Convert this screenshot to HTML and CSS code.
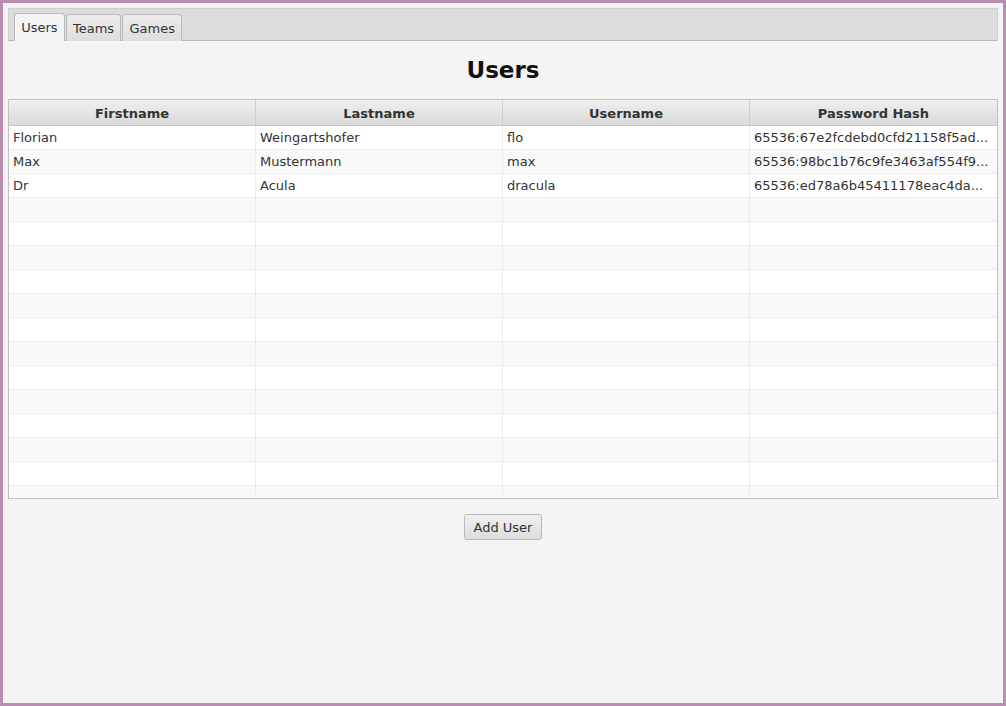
FILE: index.html
```html
<!DOCTYPE html>
<html>
<head>
<meta charset="utf-8">
<link rel="stylesheet" href="styles.css">
</head>
<body>
<div class="frame">
  <div class="tabbar">
    <div class="tab selected">Users</div>
    <div class="tab">Teams</div>
    <div class="tab">Games</div>
  </div>
  <div class="content">
    <h1 class="title">Users</h1>
    <div class="table">
      <div class="row head">
        <div class="cell">Firstname</div>
        <div class="cell">Lastname</div>
        <div class="cell">Username</div>
        <div class="cell">Password Hash</div>
      </div>
      <div class="body">
        <div class="row"><div class="cell">Florian</div><div class="cell">Weingartshofer</div><div class="cell">flo</div><div class="cell">65536:67e2fcdebd0cfd21158f5ad...</div></div>
        <div class="row"><div class="cell">Max</div><div class="cell">Mustermann</div><div class="cell">max</div><div class="cell">65536:98bc1b76c9fe3463af554f9...</div></div>
        <div class="row"><div class="cell">Dr</div><div class="cell">Acula</div><div class="cell">dracula</div><div class="cell">65536:ed78a6b45411178eac4da...</div></div>
        <div class="row"><div class="cell"></div><div class="cell"></div><div class="cell"></div><div class="cell"></div></div>
        <div class="row"><div class="cell"></div><div class="cell"></div><div class="cell"></div><div class="cell"></div></div>
        <div class="row"><div class="cell"></div><div class="cell"></div><div class="cell"></div><div class="cell"></div></div>
        <div class="row"><div class="cell"></div><div class="cell"></div><div class="cell"></div><div class="cell"></div></div>
        <div class="row"><div class="cell"></div><div class="cell"></div><div class="cell"></div><div class="cell"></div></div>
        <div class="row"><div class="cell"></div><div class="cell"></div><div class="cell"></div><div class="cell"></div></div>
        <div class="row"><div class="cell"></div><div class="cell"></div><div class="cell"></div><div class="cell"></div></div>
        <div class="row"><div class="cell"></div><div class="cell"></div><div class="cell"></div><div class="cell"></div></div>
        <div class="row"><div class="cell"></div><div class="cell"></div><div class="cell"></div><div class="cell"></div></div>
        <div class="row"><div class="cell"></div><div class="cell"></div><div class="cell"></div><div class="cell"></div></div>
        <div class="row"><div class="cell"></div><div class="cell"></div><div class="cell"></div><div class="cell"></div></div>
        <div class="row"><div class="cell"></div><div class="cell"></div><div class="cell"></div><div class="cell"></div></div>
        <div class="row"><div class="cell"></div><div class="cell"></div><div class="cell"></div><div class="cell"></div></div>
      </div>
    </div>
    <button class="btn">Add User</button>
  </div>
</div>
</body>
</html>
```

FILE: styles.css
```css
html, body {
  margin: 0;
  padding: 0;
}
body {
  font-family: "DejaVu Sans", "Liberation Sans", sans-serif;
  font-size: 13px;
  color: #333333;
}
.frame {
  box-sizing: border-box;
  width: 1006px;
  height: 706px;
  border: 3px solid #b68fb1;
  background: #f4f4f4;
  padding: 5px;
  display: flex;
  flex-direction: column;
}
.tabbar {
  box-sizing: border-box;
  height: 33px;
  background: #dcdcdc;
  border: 1px solid #cfcfcf;
  border-bottom-color: #b9b9b9;
  display: flex;
  align-items: flex-end;
  padding: 0 0 0 5px;
  gap: 1px;
}
.tab {
  box-sizing: border-box;
  height: 27px;
  margin-bottom: -1px;
  padding: 0 6.2px;
  display: flex;
  align-items: center;
  border: 1px solid #bcbcbc;
  border-bottom: none;
  border-radius: 3px 3px 0 0;
  background: linear-gradient(#ececec, #dedede);
  color: #333333;
}
.tab.selected {
  background: #f4f4f4;
  height: 28px;
}
.content {
  display: flex;
  flex-direction: column;
  align-items: center;
}
.title {
  margin: 0;
  height: 58px;
  line-height: 58px;
  font-size: 23px;
  font-weight: bold;
  color: #111111;
}
.table {
  box-sizing: border-box;
  width: 990px;
  height: 400px;
  border: 1px solid #c0c0c0;
  background: #ffffff;
  overflow: hidden;
}
.row {
  display: grid;
  grid-template-columns: 247px 247px 247px 247px;
  height: 24px;
  box-sizing: border-box;
  border-bottom: 1px solid #ececec;
}
.body .row:nth-child(even) {
  background: #f9f9f9;
}
.cell {
  box-sizing: border-box;
  border-right: 1px solid #ececec;
  padding: 0 4px;
  line-height: 23px;
  white-space: nowrap;
  overflow: hidden;
}
.cell:last-child {
  border-right: none;
}
.row.head {
  height: 26px;
  background: linear-gradient(#efefef, #dadada);
  border-bottom: 1px solid #c6c6c6;
}
.head .cell {
  text-align: center;
  font-weight: bold;
  line-height: 27px;
  border-right: 1px solid #cdcdcd;
}
.head .cell:last-child {
  border-right: none;
}
.btn {
  margin-top: 15px;
  box-sizing: border-box;
  height: 26px;
  width: 78px;
  font-family: "DejaVu Sans", "Liberation Sans", sans-serif;
  font-size: 13px;
  color: #333333;
  background: linear-gradient(#f0f0f0, #dddddd);
  border: 1px solid #b9b9b9;
  border-radius: 3px;
  padding: 0;
}
```
